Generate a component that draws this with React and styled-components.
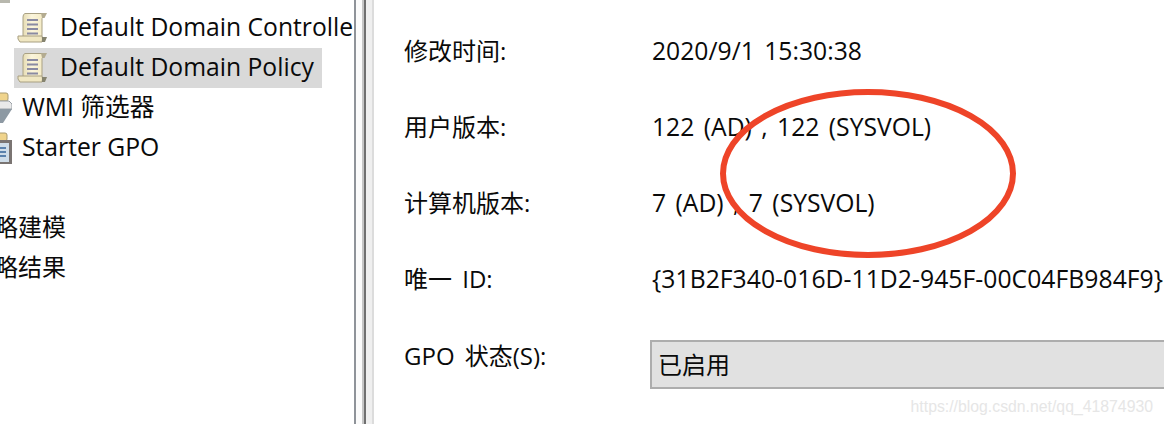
import React from "react";
import styled, { createGlobalStyle } from "styled-components";

const Global = createGlobalStyle`
  html, body { margin: 0; padding: 0; background: #fff; overflow: hidden; }
  #root { width: 1164px; height: 424px; }
`;
const FONT = `"Open Sans", "Noto Sans", "Noto Sans CJK SC", sans-serif`;

const Page = styled.div`
  position: relative; width: 1164px; height: 424px; display: flex; overflow: hidden;
  background: #fff; color: #0a0a0a; font-family: ${FONT}; font-size: 24.7px;
`;
const Tree = styled.div`
  width: 354px; flex: none; overflow: hidden; padding-top: 8px; box-sizing: border-box;
`;
const TreeList = styled.div`
  margin: -40px 0 0 -54px; display: flex; flex-direction: column;
`;
const Row = styled.div`
  height: 40px; display: flex; align-items: center; white-space: nowrap;
  padding-left: ${p => p.$indent}px; gap: ${p => p.$gap || 0}px;
  font-size: ${p => p.$size || 24.7}px;
`;
const RowText = styled.span`
  padding-bottom: ${p => p.$lift || 4}px;
`;
const RowSpacer = styled.div`height: 40px;`;
const Selected = styled.span`
  display: flex; align-items: center; gap: 11px; height: 40px; background: #d9d9d9; width: 308px; padding-left: 3px; box-sizing: border-box;
`;
const Splitter = styled.div`
  width: 20px; flex: none; display: flex; background: #fff;
`;
const Line = styled.div`
  width: ${p => p.$w}px; background: ${p => p.$c};
`;
const Panel = styled.div`
  flex: 1; padding: 13px 0 0 30px; display: grid; grid-template-columns: 246px 1fr; grid-auto-rows: 76px; align-items: center; min-width: 0; white-space: nowrap; align-content: start;
`;
const Label = styled.div`font-size: 24px; word-spacing: 4px; padding-bottom: ${p => p.$lift ?? 4}px;`;
const Value = styled.div`
  font-size: 24.7px; padding: 0 0 2px 2px; word-spacing: 3px;
  letter-spacing: ${p => p.$track || 0}px;
`;
const Status = styled.div`
  margin-top: 19px; height: 49px; width: 600px; background: #e1e1e1; border: 2px solid #adadad; box-sizing: border-box;
  display: flex; align-items: center; padding: 0 0 2px 6px; font-size: 24px;
`;
const Ellipse = styled.svg`
  position: absolute; left: 715px; top: 85px; overflow: visible;
`;
const Watermark = styled.div`
  position: absolute; right: 11px; top: 398px; font-family: "Liberation Sans", sans-serif; font-size: 15.8px; color: #e6e6e6;
`;

const Icon = styled.svg`flex: none; display: block;`;

const Scroll = () => (
  <Icon width="32" height="32" viewBox="0 0 32 32">
    <defs>
      <linearGradient id="pg" x1="0" x2="1" y1="0" y2="0">
        <stop offset="0" stopColor="#e6dcb4"/><stop offset=".4" stopColor="#fbf5dc"/><stop offset="1" stopColor="#f3e9c0"/>
      </linearGradient>
    </defs>
    <path d="M8 1.500h20l-3 5v18H6V5q0-3 2-3.500z" fill="url(#pg)" stroke="#a9a184" strokeWidth="1"/>
    <path d="M24 1h6l-2.500 5H25z" fill="#b3ab90"/>
    <path d="M10 8h11M10 12.500h11M10 17h11M10 21.500h11" stroke="#8a8aa2" strokeWidth="2"/>
    <path d="M1 24h24q1 3 0 6H3q-3-3-2-6z" fill="#f0e7c2" stroke="#a89f82"/>
    <path d="M25 25h5l-2 5h-3z" fill="#85836f"/>
  </Icon>
);
const Filter = () => (
  <Icon width="32" height="32" viewBox="0 0 32 32">
    <rect x="5" y="1" width="23" height="8" rx="2" fill="#f0d48c" stroke="#a89a70"/>
    <path d="M3 9h26l3 3v5H1v-5z" fill="#e9e9e9" stroke="#9aa0a6"/>
    <path d="M4 17h28l-9 14h-9z" fill="#8d99a3"/>
  </Icon>
);
const Starter = () => (
  <Icon width="32" height="32" viewBox="0 0 32 32">
    <rect x="5" y="1" width="22" height="8" rx="2" fill="#f0d48c" stroke="#a89a70"/>
    <rect x="2" y="8" width="30" height="24" fill="#7a7472"/>
    <rect x="5" y="11" width="24" height="19" fill="#cfdde9"/>
    <path d="M8 16h18M8 20h18M8 24h18" stroke="#5b82ad" strokeWidth="2"/>
  </Icon>
);
const ClippedFolder = () => (
  <Icon width="32" height="32" viewBox="0 0 32 32">
    <rect x="2" y="20" width="26" height="11" fill="#8d8d86"/>
    <rect x="20" y="26" width="10" height="5" fill="#b8b8ae"/>
  </Icon>
);

export default function App() {
  return (
    <Page>
      <Global />
      <Tree>
        <TreeList>
          <Row $indent={34}><ClippedFolder /></Row>
          <Row $indent={71} $gap={11}><Scroll /><RowText>Default Domain Controllers Policy</RowText></Row>
          <Row $indent={68}><Selected><Scroll /><RowText>Default Domain Policy</RowText></Selected></Row>
          <Row $indent={34} $gap={10}><Filter /><RowText $lift={6}>WMI 筛选器</RowText></Row>
          <Row $indent={34} $gap={10}><Starter /><RowText>Starter GPO</RowText></Row>
          <RowSpacer />
          <Row $indent={0} $size={24}><RowText $lift={6}>组策略建模</RowText></Row>
          <Row $indent={0} $size={24}><RowText $lift={6}>组策略结果</RowText></Row>
        </TreeList>
      </Tree>
      <Splitter>
        <Line $w={2} $c="#8f9399" />
        <Line $w={6} $c="#fbfbfb" />
        <Line $w={2} $c="#c6c6c6" />
        <Line $w={2} $c="#6f6f6f" />
        <Line $w={6} $c="#efefef" />
        <Line $w={2} $c="#dcdcdc" />
      </Splitter>
      <Panel>
        <Label>修改时间:</Label><Value>2020/9/1 15:30:38</Value>
        <Label>用户版本:</Label><Value>122 (AD) , 122 (SYSVOL)</Value>
        <Label>计算机版本:</Label><Value>7 (AD) , 7 (SYSVOL)</Value>
        <Label>唯一 ID:</Label><Value $track={0.05}>{"{31B2F340-016D-11D2-945F-00C04FB984F9}"}</Value>
        <Label $lift={2}>GPO 状态(S):</Label><Status>已启用</Status>
      </Panel>
      <Ellipse width="300" height="175" viewBox="0 0 300 175">
        <ellipse cx="153" cy="88.500" rx="145" ry="81.500" fill="none" stroke="#ee4428" strokeWidth="6"/>
      </Ellipse>
      <Watermark>https://blog.csdn.net/qq_41874930</Watermark>
    </Page>
  );
}
